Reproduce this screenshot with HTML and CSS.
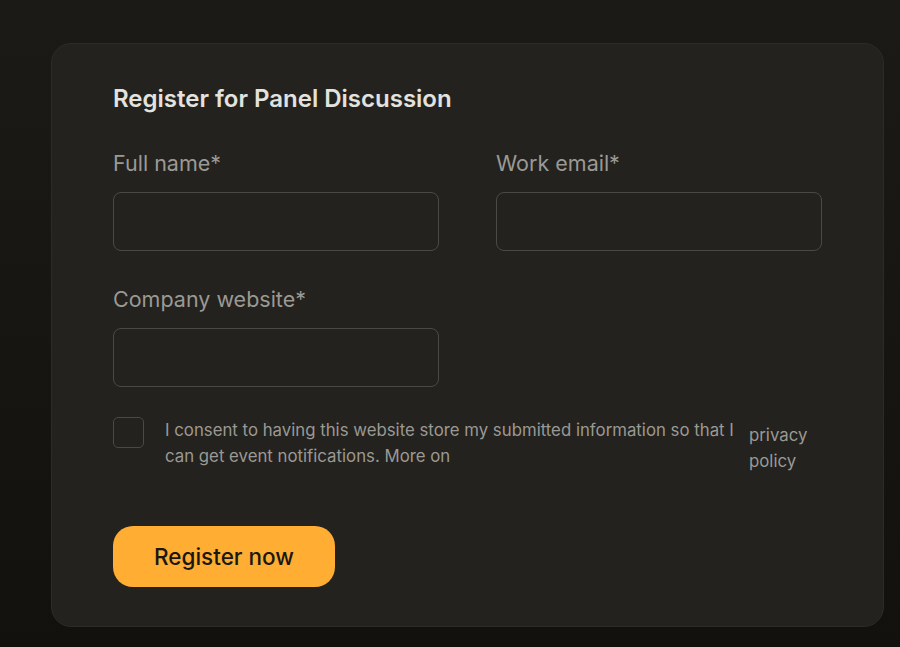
FILE: index.html
```html
<!DOCTYPE html>
<html lang="en">
<head>
<meta charset="utf-8">
<title>Register for Panel Discussion</title>
<link rel="stylesheet" href="styles.css">
</head>
<body>
<main class="page">
  <form class="card">
    <h2 class="title">Register for Panel Discussion</h2>
    <div class="grid">
      <label class="field">
        <span class="label">Full name*</span>
        <input class="input" type="text">
      </label>
      <label class="field">
        <span class="label">Work email*</span>
        <input class="input" type="email">
      </label>
      <label class="field">
        <span class="label">Company website*</span>
        <input class="input" type="url">
      </label>
    </div>
    <div class="consent">
      <span class="checkbox"></span>
      <p class="consent-text">I consent to having this website store my submitted information so that I can get event notifications. More on</p>
      <a class="consent-link" href="#">privacy policy</a>
    </div>
    <button class="button" type="button">Register now</button>
  </form>
</main>
</body>
</html>
```

FILE: styles.css
```css
* { box-sizing: border-box; }
html, body { margin: 0; height: 100%; }
body {
  background: linear-gradient(180deg, #1b1a16 0%, #12110e 100%);
  font-family: Inter, "Noto Sans", sans-serif;
  overflow: hidden;
}
.page {
  padding: 43px 16px 0 51px;
}
.card {
  width: 833px;
  height: 584px;
  background: #23221e;
  border: 1px solid #2d2b26;
  border-radius: 20px;
  padding: 40px 61px 39px 61px;
  display: flex;
  flex-direction: column;
}
.title {
  margin: 0;
  font-size: 24px;
  line-height: 30px;
  font-weight: 600;
  color: #e4e2de;
}
.grid {
  margin-top: 35px;
  display: grid;
  grid-template-columns: 326px 326px;
  column-gap: 57px;
  row-gap: 34px;
}
.field {
  display: flex;
  flex-direction: column;
  gap: 15px;
}
.label {
  font-size: 21.5px;
  line-height: 28px;
  color: #9b9994;
}
.input {
  height: 59px;
  width: 100%;
  background: transparent;
  border: 1px solid #4b4944;
  border-radius: 8px;
  outline: none;
  color: #e4e2de;
  font: inherit;
}
.consent {
  margin-top: 30px;
  display: flex;
  align-items: flex-start;
}
.checkbox {
  flex: 0 0 31px;
  height: 31px;
  border: 1px solid #4b4944;
  border-radius: 5px;
  margin-right: 21px;
}
.consent-text {
  margin: 0;
  width: 578px;
  font-size: 16.8px;
  line-height: 26px;
  color: #9b9994;
}
.consent-link {
  margin-left: 6px;
  margin-top: 5px;
  font-size: 16.8px;
  line-height: 26px;
  color: #9b9994;
  text-decoration: none;
  width: 62px;
}
.button {
  margin-top: 52px;
  width: 222px;
  height: 61px;
  border: none;
  border-radius: 20px;
  background: #ffad33;
  color: #1a1813;
  font-family: Inter, "Noto Sans", sans-serif;
  font-size: 22.5px;
  font-weight: 500;
  cursor: pointer;
}
```
